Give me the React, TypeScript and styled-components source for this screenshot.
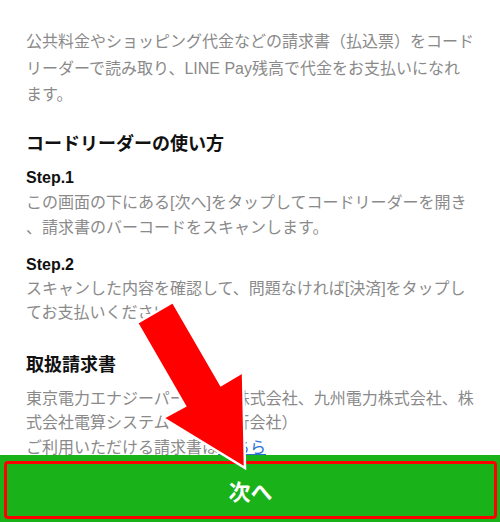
import React from 'react';
import styled, { createGlobalStyle } from 'styled-components';

const GlobalStyle = createGlobalStyle`
	html, body {
		margin: 0;
		padding: 0;
		background: #fff;
	}
	body {
		font-family: "Liberation Sans", "Noto Sans CJK JP", sans-serif;
	}
`;

const Page = styled.div`
	position: relative;
	width: 500px;
	height: 522px;
	display: flex;
	flex-direction: column;
	overflow: hidden;
`;

const Content = styled.div`
	flex: 1;
	padding: 29px 26px 0 26px;
	overflow: hidden;
`;

const Paragraph = styled.p<{ $gap?: number; $lh?: number }>`
	margin: 0 0 ${(p) => p.$gap ?? 0}px 0;
	font-size: 16px;
	line-height: ${(p) => p.$lh ?? 26}px;
	color: #8a8a8a;
	white-space: nowrap;
`;

const Heading = styled.h2<{ $gap: number }>`
	margin: 0 0 ${(p) => p.$gap}px 0;
	font-size: 18px;
	line-height: 26px;
	font-weight: bold;
	color: #111;
`;

const StepTitle = styled.h3`
	margin: 0;
	font-size: 16px;
	line-height: 24px;
	font-weight: bold;
	color: #111;
`;

const Link = styled.a`
	color: #2a6fd6;
	text-decoration: underline;
`;

const Footer = styled.div`
	height: 67px;
	background: #19b218;
	padding: 6px 3px 3px 4px;
	box-sizing: border-box;
	display: flex;
`;

const NextButton = styled.button`
	flex: 1;
	border: 3.5px solid #ff0000;
	border-radius: 4px;
	background: #19b218;
	color: #fff;
	font-family: "Noto Sans CJK JP", sans-serif;
	font-size: 22px;
	font-weight: bold;
	padding: 0;
	cursor: pointer;
`;

const ArrowLayer = styled.svg`
	position: absolute;
	left: 0;
	top: 0;
	pointer-events: none;
`;

const App: React.FC = () => {
	return (
		<Page>
			<GlobalStyle />
			<Content>
				<Paragraph $gap={22} $lh={26.5}>
					公共料金やショッピング代金などの請求書（払込票）をコード
					<br />
					リーダーで読み取り、LINE Pay残高で代金をお支払いになれ
					<br />
					ます。
				</Paragraph>
				<Heading $gap={9}>コードリーダーの使い方</Heading>
				<StepTitle>Step.1</StepTitle>
				<Paragraph $gap={13} $lh={25}>
					この画面の下にある[次へ]をタップしてコードリーダーを開き
					<br />
					、請求書のバーコードをスキャンします。
				</Paragraph>
				<StepTitle>Step.2</StepTitle>
				<Paragraph $gap={27} $lh={24}>
					スキャンした内容を確認して、問題なければ[決済]をタップし
					<br />
					てお支払いください。
				</Paragraph>
				<Heading $gap={9}>取扱請求書</Heading>
				<Paragraph $lh={24.5}>
					東京電力エナジーパートナー株式会社、九州電力株式会社、株
					<br />
					式会社電算システム（収納代行会社）
					<br />
					ご利用いただける請求書は<Link href="#">こちら</Link>
				</Paragraph>
			</Content>
			<Footer>
				<NextButton>次へ</NextButton>
			</Footer>
			<ArrowLayer width="500" height="522" viewBox="0 0 500 522">
				<polygon
					points="137,323 173,302 221,385 243,372 245,468 163,418 185,406"
					fill="#ff0000"
					stroke="#fff"
					strokeWidth="2.5"
					strokeLinejoin="miter"
				/>
			</ArrowLayer>
		</Page>
	);
};

export default App;
